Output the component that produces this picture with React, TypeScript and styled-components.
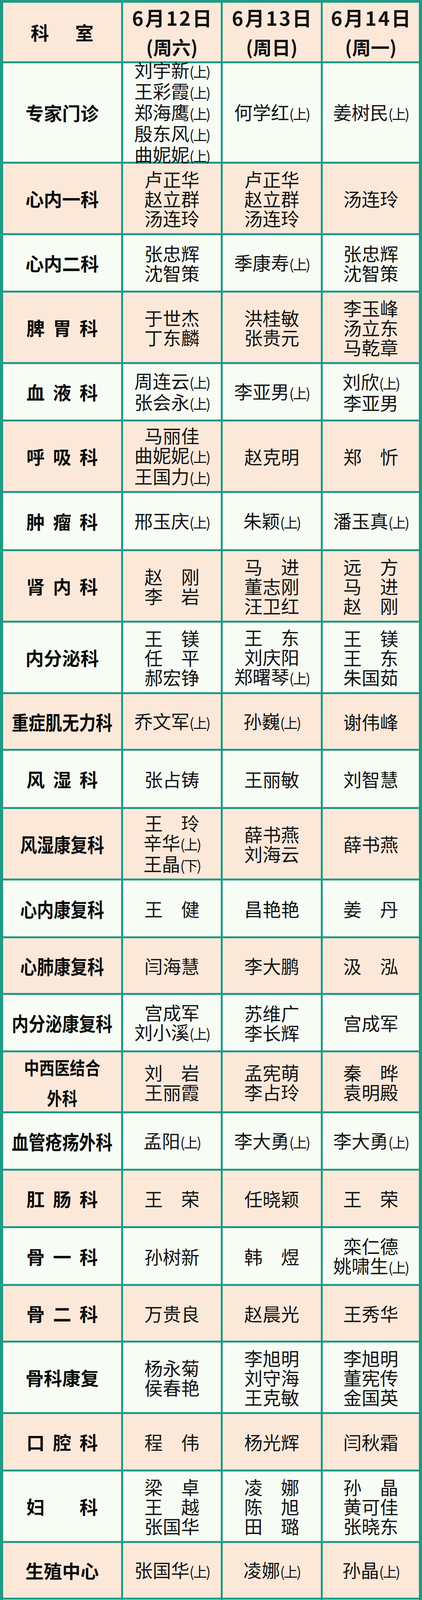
import React from "react";
import styled, { createGlobalStyle } from "styled-components";

const TEAL = "#1f9a87";
const PEACH = "#fce8d9";
const LIGHT = "#f7fcf4";

const Global = createGlobalStyle`
  html, body { margin: 0; padding: 0; background: ${TEAL}; }
  body { font-family: "Noto Sans CJK SC", "Noto Sans", sans-serif; color: #111; }
`;

const Table = styled.div`
  width: 1080px;
  box-sizing: border-box;
  padding: 7px 8px 9px 8px;
  background: ${TEAL};
  display: flex;
  flex-direction: column;
  gap: 5px;
`;

const Row = styled.div<{ $h: number }>`
  display: grid;
  grid-template-columns: 302px 250px 251px 246px;
  grid-template-rows: ${(p) => p.$h}px;
  column-gap: 5px;
  height: ${(p) => p.$h}px;
  flex: none;
`;

const Cell = styled.div<{ $peach: boolean }>`
  background: ${(p) => (p.$peach ? PEACH : LIGHT)};
  display: flex;
  flex-direction: column;
  align-items: center;
  justify-content: center;
  min-width: 0;
`;

const Dept = styled.div<{ $size: number; $spacing: number; $lh: number; $squeeze: number }>`
  font-weight: 700;
  font-size: ${(p) => p.$size}px;
  line-height: ${(p) => p.$lh}px;
  letter-spacing: ${(p) => p.$spacing}px;
  margin-right: -${(p) => p.$spacing}px;
  text-align: center;
  white-space: pre;
  transform: scaleX(${(p) => p.$squeeze});
  color: #0c0c0c;
`;

const DateLine = styled.div`
  font-weight: 700;
  font-size: 50px;
  line-height: 75px;
  letter-spacing: 4px;
  margin-right: -4px;
  white-space: nowrap;
`;

const WeekLine = styled.div`
  font-weight: 700;
  font-size: 48px;
  line-height: 75px;
  white-space: nowrap;
`;

const NameList = styled.div`
  display: flex;
  flex-direction: column;
  align-items: center;
`;

const Name = styled.div`
  font-weight: 400;
  font-size: 47px;
  line-height: 50px;
  white-space: pre;
  color: #141414;
`;

const Tag = styled.span`
  font-size: 36px;
  letter-spacing: -3px;
`;

type Dep = { dept: string; cols: string[][]; h: number };

const data: Dep[] = [
  { dept: "专家门诊", h: 252, cols: [["刘宇新(上)", "王彩霞(上)", "郑海鹰(上)", "殷东风(上)", "曲妮妮(上)"], ["何学红(上)"], ["姜树民(上)"]] },
  { dept: "心内一科", h: 178, cols: [["卢正华", "赵立群", "汤连玲"], ["卢正华", "赵立群", "汤连玲"], ["汤连玲"]] },
  { dept: "心内二科", h: 142, cols: [["张忠辉", "沈智策"], ["季康寿(上)"], ["张忠辉", "沈智策"]] },
  { dept: "脾胃科", h: 178, cols: [["于世杰", "丁东麟"], ["洪桂敏", "张贵元"], ["李玉峰", "汤立东", "马乾章"]] },
  { dept: "血液科", h: 142, cols: [["周连云(上)", "张会永(上)"], ["李亚男(上)"], ["刘欣(上)", "李亚男"]] },
  { dept: "呼吸科", h: 178, cols: [["马丽佳", "曲妮妮(上)", "王国力(上)"], ["赵克明"], ["郑　忻"]] },
  { dept: "肿瘤科", h: 144, cols: [["邢玉庆(上)"], ["朱颖(上)"], ["潘玉真(上)"]] },
  { dept: "肾内科", h: 178, cols: [["赵　刚", "李　岩"], ["马　进", "董志刚", "汪卫红"], ["远　方", "马　进", "赵　刚"]] },
  { dept: "内分泌科", h: 178, cols: [["王　镁", "任　平", "郝宏铮"], ["王　东", "刘庆阳", "郑曙琴(上)"], ["王　镁", "王　东", "朱国茹"]] },
  { dept: "重症肌无力科", h: 140, cols: [["乔文军(上)"], ["孙巍(上)"], ["谢伟峰"]] },
  { dept: "风湿科", h: 144, cols: [["张占铸"], ["王丽敏"], ["刘智慧"]] },
  { dept: "风湿康复科", h: 178, cols: [["王　玲", "辛华(上)", "王晶(下)"], ["薛书燕", "刘海云"], ["薛书燕"]] },
  { dept: "心内康复科", h: 143, cols: [["王　健"], ["昌艳艳"], ["姜　丹"]] },
  { dept: "心肺康复科", h: 140, cols: [["闫海慧"], ["李大鹏"], ["汲　泓"]] },
  { dept: "内分泌康复科", h: 142, cols: [["宫成军", "刘小溪(上)"], ["苏维广", "李长辉"], ["宫成军"]] },
  { dept: "中西医结合\n外科", h: 151, cols: [["刘　岩", "王丽霞"], ["孟宪萌", "李占玲"], ["秦　晔", "袁明殿"]] },
  { dept: "血管疮疡外科", h: 142, cols: [["孟阳(上)"], ["李大勇(上)"], ["李大勇(上)"]] },
  { dept: "肛肠科", h: 142, cols: [["王　荣"], ["任晓颖"], ["王　荣"]] },
  { dept: "骨一科", h: 143, cols: [["孙树新"], ["韩　煜"], ["栾仁德", "姚啸生(上)"]] },
  { dept: "骨二科", h: 140, cols: [["万贵良"], ["赵晨光"], ["王秀华"]] },
  { dept: "骨科康复", h: 178, cols: [["杨永菊", "侯春艳"], ["李旭明", "刘守海", "王克敏"], ["李旭明", "董宪传", "金国英"]] },
  { dept: "口腔科", h: 142, cols: [["程　伟"], ["杨光辉"], ["闫秋霜"]] },
  { dept: "妇科", h: 178, cols: [["梁　卓", "王　越", "张国华"], ["凌　娜", "陈　旭", "田　璐"], ["孙　晶", "黄可佳", "张晓东"]] },
  { dept: "生殖中心", h: 140, cols: [["张国华(上)"], ["凌娜(上)"], ["孙晶(上)"]] },
  { dept: "儿科", h: 178, cols: [["谢　彬", "白晓红(上)"], ["董　丹", "赵历军(上)", "孙婷婷(上)"], ["潘墨墨", "刘芳(上)"]] },
  { dept: "整形科", h: 144, cols: [["刘　美"], ["王双勋"], ["高　晶"]] },
  { dept: "治未病科", h: 141, cols: [["李晓娟", "欧　洋"], ["刘文华"], ["韩　雪", "王　莉"]] },
  { dept: "眼科", h: 142, cols: [["王　静", "马冰松"], ["高　宁", "胡晓丹"], ["赫　群", "任　芳"]] },
  { dept: "耳鼻喉科", h: 142, cols: [["马仲平", "石　磊"], ["金　伟", "吕　洪"], ["马仲平", "金　伟"]] },
  { dept: "皮肤科", h: 178, cols: [["芦　源", "黄　瑾", "蔡昌盛"], ["刘　彬", "张永熙", "李忻红"], ["李国强", "赵宏伟", "关小红"]] },
  { dept: "脑病科", h: 143, cols: [["田迎春", "侯本赤"], ["蔡　虹", "车戬(上)"], ["侯本赤", "庞蕾蕾"]] },
  { dept: "脑病康复科", h: 252, cols: [["刘光辉", "邵　妍", "刘峻(上)"], ["白　丽", "杨　森", "李英南"], ["王恩龙", "鞠庆波(上)", "赵　霞(下)", "周鸿飞(上)", "高佳秀(下)"]] },
  { dept: "感染科", h: 142, cols: [["郑佳连"], ["吴百灵"], ["吴百灵"]] },
];

function deptStyle(name: string) {
  if (name.includes("\n")) return { size: 46, spacing: 0, lh: 78, squeeze: 0.85 };
  const n = name.length;
  if (n === 2) return { size: 47, spacing: 89, lh: 50, squeeze: 1 };
  if (n === 3) return { size: 47, spacing: 21, lh: 50, squeeze: 1 };
  if (n === 4) return { size: 47, spacing: 0, lh: 50, squeeze: 1 };
  return { size: 50, spacing: 0, lh: 50, squeeze: 0.86 };
}

function NameLine({ text }: { text: string }) {
  const m = text.match(/^(.*)(\((上|下)\))$/);
  if (!m) return <Name>{text}</Name>;
  return (
    <Name>
      {m[1]}
      <Tag>{m[2]}</Tag>
    </Name>
  );
}

const headers = [
  ["6月12日", "(周六)"],
  ["6月13日", "(周日)"],
  ["6月14日", "(周一)"],
];

export default function App() {
  return (
    <>
      <Global />
      <Table>
        <Row $h={150}>
          <Cell $peach>
            <Dept $size={47} $spacing={67} $lh={50} $squeeze={1}>科室</Dept>
          </Cell>
          {headers.map(([d, w]) => (
            <Cell $peach key={d}>
              <DateLine>{d}</DateLine>
              <WeekLine>{w}</WeekLine>
            </Cell>
          ))}
        </Row>
        {data.map((r, i) => {
          const peach = i % 2 === 1;
          const s = deptStyle(r.dept);
          return (
            <Row $h={r.h} key={r.dept}>
              <Cell $peach={peach}>
                <Dept $size={s.size} $spacing={s.spacing} $lh={s.lh} $squeeze={s.squeeze}>
                  {r.dept}
                </Dept>
              </Cell>
              {r.cols.map((c, j) => (
                <Cell $peach={peach} key={j}>
                  <NameList>
                    {c.map((n, k) => (
                      <NameLine text={n} key={k} />
                    ))}
                  </NameList>
                </Cell>
              ))}
            </Row>
          );
        })}
      </Table>
    </>
  );
}
